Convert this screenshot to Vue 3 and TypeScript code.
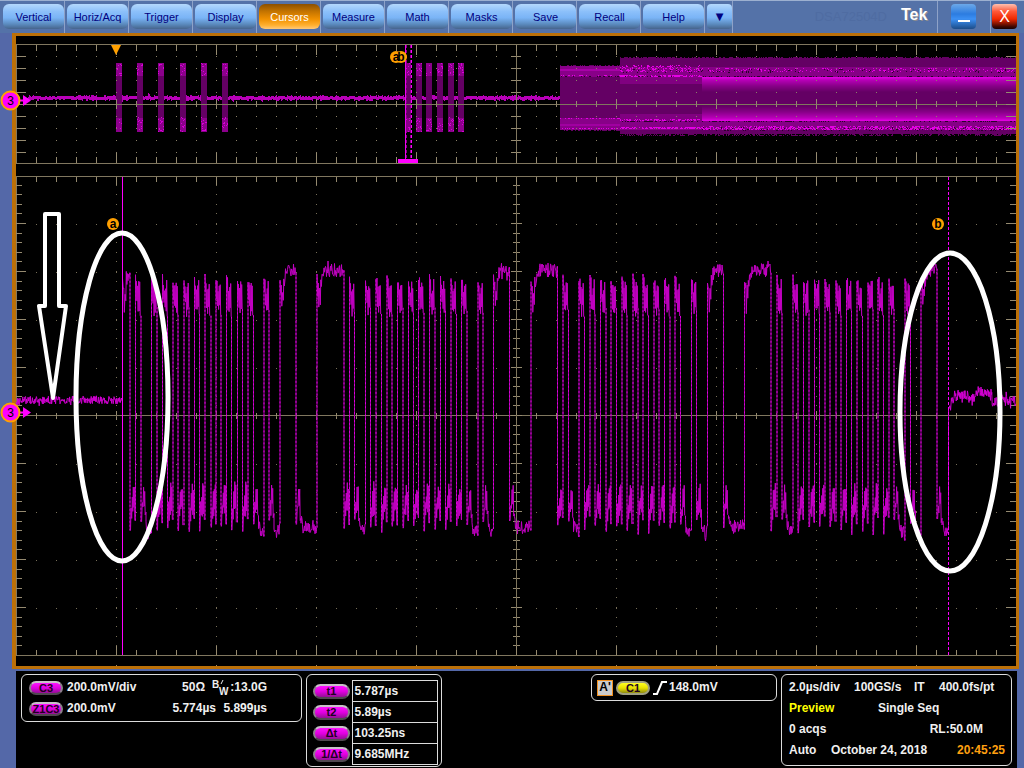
<script setup lang="ts">
const tabs: string[] = [
  'Vertical', 'Horiz/Acq', 'Trigger', 'Display', 'Cursors', 'Measure',
  'Math', 'Masks', 'Save', 'Recall', 'Help',
]
const activeTab = 'Cursors'

const readouts = [
  { label: 't1', value: '5.787µs' },
  { label: 't2', value: '5.89µs' },
  { label: 'Δt', value: '103.25ns' },
  { label: '1/Δt', value: '9.685MHz' },
]

/* Deterministic noise source, so the traces are stable between renders. */
let seed = 20181024
function rnd(): number {
  seed = (seed * 1664525 + 1013904223) % 4294967296
  return seed / 4294967296
}
function jitter(amount: number): number {
  return (rnd() * 2 - 1) * amount
}
function r1(v: number): number {
  return Math.round(v * 10) / 10
}

/* ---- graticules ---- */
const LEFT = 16
const RIGHT = 1016
const MID = 516

function overviewGrid(): string {
  let d = ''
  for (let i = 1; i < 50; i++) {
    const x = LEFT + i * 20
    const big = i % 5 === 0
    d += `M${x + 0.5} 45v${big ? 10 : 6}M${x + 0.5} 163v${big ? -10 : -6}M${x + 0.5} ${big ? 99 : 101}v${big ? 10 : 6}`
  }
  for (let j = 1; j < 10; j++) {
    const y = 44.5 + j * 12
    d += `M${LEFT} ${y}h10M${RIGHT} ${y}h-10M${MID - 5} ${y}h10`
  }
  return d
}
function overviewDots(): string {
  let d = ''
  for (let i = 1; i < 50; i++) {
    for (let j = 1; j < 10; j++) d += `M${LEFT + i * 20} ${44.5 + j * 12}h1`
  }
  return d
}
function mainGrid(): string {
  let d = ''
  for (let i = 1; i < 50; i++) {
    const x = LEFT + i * 20 + 0.5
    const big = i % 5 === 0
    d += `M${x} 177v${big ? 9 : 5}M${x} 655v${big ? -9 : -5}M${x} ${big ? 411 : 413}v${big ? 9 : 6}`
    if (big) d += `M${x} 665v1`
  }
  for (let j = 1; j < 50; j++) {
    const y = Math.round(176 + j * 9.6) - 0.5
    const big = j % 5 === 0
    const n = big ? 10 : 6
    const m = big ? 5 : 3
    d += `M${LEFT} ${y}h${n}M${RIGHT} ${y}h${-n}M${MID - m} ${y}h${m * 2 + 1}`
  }
  return d
}
function mainDots(): string {
  let d = ''
  for (let i = 1; i < 10; i++) {
    for (let j = 1; j < 50; j++) d += `M${LEFT + i * 100} ${Math.round(176 + j * 9.6) - 0.5}h1`
  }
  for (let j = 1; j < 10; j++) {
    for (let i = 1; i < 50; i++) d += `M${LEFT + i * 20} ${176 + j * 48 + 0.5}h1`
  }
  return d
}

/* ---- zoomed waveform: alternating rise and fall positions ---- */
const transitions: number[] = [
  122, 129.5, 135, 140.5, 151, 156.5, 162, 167, 172.5, 177.5, 183.5, 188.5, 194, 199,
  204.5, 210.5, 215.5, 220.5, 226, 231, 237, 242, 247.5, 253, 263.5, 268.5, 279.5, 295.5,
  316.5, 343.5, 349, 354, 365, 370, 375.5, 381, 386.5, 391.5, 397, 402.5, 408, 413, 418, 423.5,
  429, 434.5, 440, 445, 450.5, 456, 461, 466.5, 477.5, 482.5, 493, 509, 530.5, 557,
  562.5, 568, 578.5, 584, 589.5, 594.5, 600, 605.5, 610.5, 616, 621.5, 626.5, 632.5, 637.5,
  642.5, 648, 653.5, 658.5, 664, 669.5, 674.5, 680, 691, 696, 707, 723, 744, 770.5,
  776.5, 781.5, 792.5, 797.5, 803, 808.5, 814, 819, 824.5, 829.5, 835.5, 840.5, 846, 851,
  856.5, 862, 867.5, 872.5, 877.5, 883, 888.5, 893.5, 904.5, 910, 920.5, 936.5, 948,
]

const shortHigh = [[0, 278], [0.5, 296], [1, 282], [1.5, 306], [2, 290], [2.6, 312], [3.2, 286], [3.7, 308], [4.2, 284], [4.7, 312]]
const longHigh = [[0, 279], [0.7, 292], [1.3, 284], [1.8, 309], [2.6, 290], [3.3, 300], [3.8, 276], [4.4, 284]]
const shortLow = [[0.5, 530], [1.1, 505], [1.7, 518], [2.3, 494], [2.8, 512], [3.3, 485], [3.8, 510], [4.3, 488], [4.8, 521]]
const longLow = [[0.6, 523], [1.3, 505], [1.9, 512], [2.6, 487], [3.2, 508], [3.7, 488], [4.2, 518], [5, 514]]

const crests: string[] = []
const edges: string[] = []
function buildWave(): void {
  let lastY = 400
  for (let i = 0; i < transitions.length - 1; i++) {
    const x0 = transitions[i]
    const w = transitions[i + 1] - x0
    const high = i % 2 === 0
    const long = w > 6.5
    const shape = high ? (long ? longHigh : shortHigh) : long ? longLow : shortLow
    const points = shape
      .filter((p) => p[0] < w)
      .map((p) => [x0 + p[0], p[1] + jitter(5)])
    if (long) {
      const level = high ? (w < 9 ? 276 : 270) : w > 15 ? 527 : 531
      for (let t = 5; t < w - 0.3; t += 0.5) {
        const settle = high ? Math.max(0, 8 - t) * 1.5 : -Math.max(0, 7 - t) * 3
        const spike = rnd() < 0.15 ? jitter(5) : 0
        points.push([x0 + t, level + settle + spike + jitter(7)])
      }
    }
    edges.push(`M${x0 + 0.5} ${r1(lastY)}V${r1(points[0][1])}`)
    crests.push('M' + points.map((p) => `${r1(p[0] + 0.5)} ${r1(p[1])}`).join('L'))
    lastY = points[points.length - 1][1]
  }
  edges.push(`M948.5 ${r1(lastY)}V410`)
}
buildWave()

function noisyLine(from: number, to: number, step: number, amp: number, level: (x: number) => number): string {
  const pts: string[] = []
  for (let x = from; x <= to; x += step) {
    const spike = rnd() < 0.12 ? jitter(amp) : 0
    pts.push(`${r1(x)} ${r1(level(x) + spike + jitter(amp))}`)
  }
  return 'M' + pts.join('L')
}
const lead = noisyLine(16, 122, 0.4, 4, (x) => 400 + Math.max(0, 24 - x) / 3)
function tailLevel(x: number): number {
  if (x < 953) return 409 - (x - 949) * 2.2
  if (x < 958) return 400 - (x - 953)
  if (x < 968) return 395
  if (x < 976) return 398
  if (x < 989) return 392
  if (x < 992) return 396
  return 401
}
const tail = noisyLine(949, 1016, 0.4, 5, tailLevel)

/* ---- overview waveform ---- */
const bursts: number[] = [116, 137, 158, 180, 201, 222, 405, 416, 426, 437, 448, 458]
const overviewBase = noisyLine(28, 560, 1, 1, () => 98)

function speckle(from: number, to: number, top: number, bottom: number, density: number): string {
  let d = ''
  for (let y = top; y < bottom; y++) {
    for (let x = from; x < to; x++) {
      if (rnd() < density) d += `M${x} ${y + 0.5}h1`
    }
  }
  return d
}
const burstSpeckle = bursts
  .map((x) => speckle(x, x + 6, 63, 76, 0.12) + speckle(x, x + 6, 117, 132, 0.12))
  .join('')
const brightSpeckle =
  speckle(560, 620, 75, 76, 0.4) + speckle(560, 620, 118, 119, 0.4) + speckle(560, 620, 128, 129, 0.5) +
  speckle(620, 702, 65, 72, 0.25) + speckle(620, 702, 75, 77, 0.5) + speckle(620, 702, 119, 121, 0.5) +
  speckle(620, 702, 127, 129, 0.6) + speckle(702, 1016, 68, 72, 0.17) + speckle(702, 1016, 126, 130, 0.42)
const darkSpeckle =
  speckle(620, 1016, 69, 73, 0.06) + speckle(560, 1016, 76, 77, 0.35) +
  speckle(620, 1016, 121, 122, 0.35) + speckle(702, 1016, 127, 131, 0.14)
const fringe =
  speckle(560, 620, 65, 66, 0.5) + speckle(560, 620, 130, 131, 0.5) +
  speckle(620, 1016, 57, 58, 0.5) + speckle(620, 1016, 134, 136, 0.4)

const channelMarkers: number[] = [100, 412]
</script>

<template>
  <div class="scope">
    <header class="menubar">
      <nav class="tabs" aria-label="Main menu">
        <span v-for="tab in tabs" :key="tab" class="slot">
          <button type="button" class="tab" :class="{ active: tab === activeTab }">{{ tab }}</button>
        </span>
        <span class="slot"><button type="button" class="tab more" aria-label="More menus">▼</button></span>
      </nav>
      <span class="model">DSA72504D</span>
      <span class="brand">Tek</span>
      <span class="window-slot divided"><button type="button" class="win min" aria-label="Minimize"><i class="dash"></i></button></span>
      <span class="window-slot"><button type="button" class="win close" aria-label="Close">X</button></span>
    </header>

    <main class="display">
      <svg class="screen" viewBox="16 36 1000 630" role="img" aria-label="Waveform display">
        <defs>
          <linearGradient id="upperGlow" x1="0" y1="0" x2="0" y2="1">
            <stop offset="0" stop-color="#e800e8" />
            <stop offset="0.2" stop-color="#b800b8" />
            <stop offset="0.6" stop-color="#880088" />
            <stop offset="1" stop-color="#640064" />
          </linearGradient>
          <linearGradient id="lowerGlow" x1="0" y1="1" x2="0" y2="0">
            <stop offset="0" stop-color="#e800e8" />
            <stop offset="0.2" stop-color="#b800b8" />
            <stop offset="0.6" stop-color="#880088" />
            <stop offset="1" stop-color="#640064" />
          </linearGradient>
        </defs>

        <!-- overview traces -->
        <g shape-rendering="crispEdges">
          <path :d="overviewBase" class="base" />
          <g v-for="x in bursts" :key="x">
            <rect :x="x" y="63" width="6" height="69" fill="#640064" />
            <rect :x="x" y="63" width="6" height="13" fill="#8c008c" />
            <rect :x="x" y="118" width="6" height="14" fill="#8c008c" />
          </g>
          <path :d="burstSpeckle" stroke="#d800d8" />
          <rect x="560" y="66" width="60" height="64" fill="#640064" />
          <rect x="560" y="66" width="60" height="11" fill="#880088" />
          <rect x="560" y="69" width="60" height="2" fill="#a800a8" />
          <rect x="560" y="118" width="60" height="12" fill="#880088" />
          <rect x="560" y="124" width="60" height="2" fill="#a000a0" />
          <rect x="620" y="58" width="396" height="76" fill="#640064" />
          <rect x="620" y="67" width="396" height="11" fill="#860086" />
          <rect x="620" y="78" width="82" height="6" fill="#800080" />
          <rect x="620" y="114" width="82" height="6" fill="#800080" />
          <rect x="620" y="120" width="396" height="10" fill="#860086" />
          <rect x="702" y="77" width="314" height="15" fill="url(#upperGlow)" />
          <rect x="702" y="106" width="314" height="15" fill="url(#lowerGlow)" />
          <path :d="fringe" stroke="#640064" />
          <path :d="darkSpeckle" stroke="#2c002c" />
          <path :d="brightSpeckle" stroke="#e400e4" />
        </g>

        <!-- graticules -->
        <g shape-rendering="crispEdges" fill="none">
          <path d="M16 44.5H1016M16 163.5H1016M16 104.5H1016M16.5 44V164M516.5 44V164" stroke="#80775f" />
          <path :d="overviewGrid()" stroke="#958a70" />
          <path :d="overviewDots()" stroke="#8a8068" />
          <path d="M16 176.5H1016M16 655.5H1016M16 415.5H1016M16.5 176V656M516.5 176V656" stroke="#80775f" />
          <path :d="mainGrid()" stroke="#958a70" />
          <path :d="mainDots()" stroke="#776e58" />
        </g>

        <!-- zoomed trace -->
        <g fill="none">
          <path :d="edges.join('')" class="edge" />
          <path :d="edges.join('')" class="edge-dots" />
          <path :d="crests.join('')" class="crest" />
          <path :d="lead" class="flat" />
          <path :d="tail" class="flat" />
        </g>

        <!-- cursors and markers -->
        <g shape-rendering="crispEdges">
          <path d="M406.5 45V160M410.5 45V160" stroke="#8c008c" stroke-dasharray="3 2" />
          <path d="M405.5 45V160" stroke="#f000f0" />
          <path d="M411.5 45V160" stroke="#ff00ff" stroke-dasharray="3 2" />
          <rect x="398" y="159" width="20" height="4" fill="#ff00ff" />
          <path d="M122.5 177V655" stroke="#ff00ff" />
          <path d="M948.5 177V655" stroke="#ff00ff" stroke-dasharray="3 2" />
        </g>
        <path d="M111 45H121L116 55Z" fill="#ffa000" />

        <g class="cursor-tag">
          <circle cx="396" cy="57" r="6" />
          <circle cx="401" cy="57" r="6" />
          <text x="396" y="61">a</text>
          <text x="401" y="61">b</text>
          <circle cx="113" cy="224" r="6" />
          <text x="113" y="228">a</text>
          <circle cx="938" cy="224" r="6" />
          <text x="938" y="228">b</text>
        </g>

        <g v-for="y in channelMarkers" :key="y" class="channel-tag">
          <path :d="`M20 ${y + 0.5}h5`" stroke="#ff00ff" stroke-width="2" />
          <path :d="`M23 ${y - 5}L31 ${y + 0.5}L23 ${y + 6}Z`" fill="#ff00ff" />
          <circle cx="10.5" :cy="y + 0.5" r="9" />
          <text x="10.5" :y="y + 5">3</text>
        </g>

        <!-- annotations -->
        <g fill="none" stroke="#fff">
          <ellipse cx="122" cy="397" rx="46" ry="164" stroke-width="5" />
          <ellipse cx="950" cy="412" rx="50" ry="159" stroke-width="5" />
          <path d="M45 214H59V306H66L53 398L39 306H45Z" stroke-width="4" stroke-linejoin="round" />
        </g>
      </svg>
    </main>

    <footer class="status">
      <section class="panel channels" aria-label="Channels">
        <span class="pill">C3</span>
        <span>200.0mV/div</span>
        <span class="right impedance">50Ω</span>
        <span class="right bandwidth">
          <svg class="bw" viewBox="0 0 18 18" width="18" height="18" aria-label="Bandwidth">
            <text x="0" y="9">B</text>
            <text x="7" y="16">W</text>
            <path d="M9 5L11 1" stroke="#f0f0f0" />
          </svg>:13.0G
        </span>
        <span class="pill">Z1C3</span>
        <span>200.0mV</span>
        <span class="right">5.774µs</span>
        <span class="right">5.899µs</span>
      </section>

      <section class="panel cursors" aria-label="Cursor readouts">
        <table>
          <tbody>
            <tr v-for="row in readouts" :key="row.label">
              <th scope="row"><span class="pill wide">{{ row.label }}</span></th>
              <td>{{ row.value }}</td>
            </tr>
          </tbody>
        </table>
      </section>

      <section class="panel trigger" aria-label="Trigger">
        <span class="event">A'</span>
        <span class="pill yellow">C1</span>
        <svg class="slope" viewBox="0 0 14 14" width="14" height="14" aria-label="Rising edge">
          <path d="M0 13H4L9 1H14" fill="none" stroke="#fff" stroke-width="2" />
        </svg>
        <span>148.0mV</span>
      </section>

      <section class="panel acquisition" aria-label="Acquisition">
        <div class="line">
          <span class="c1">2.0µs/div</span><span class="c2">100GS/s</span><span class="c3">IT</span><span>400.0fs/pt</span>
        </div>
        <div class="line">
          <span class="preview">Preview</span><span>Single Seq</span>
        </div>
        <div class="line spread">
          <span>0 acqs</span><span class="record">RL:50.0M</span>
        </div>
        <div class="line">
          <span class="auto">Auto</span><span>October 24, 2018</span><span class="clock">20:45:25</span>
        </div>
      </section>
    </footer>
  </div>
</template>

<style>
body {
  margin: 0;
  background: #5468a8;
}
</style>

<style scoped>
.scope {
  display: flex;
  flex-direction: column;
  min-height: 100vh;
  background: #5468a8;
  font-family: "Liberation Sans", Arial, sans-serif;
}
.scope * {
  box-sizing: border-box;
}
button {
  margin: 0;
  padding: 0;
  border: 0;
  font-family: inherit;
}

/* menu bar */
.menubar {
  display: flex;
  height: 33px;
  background: #5472a8;
  border-top: 1px solid #9cb0d0;
}
.tabs {
  display: flex;
  padding-left: 1px;
}
.slot {
  display: flex;
  padding: 3px 0 4px 2px;
  border-right: 1px solid #8ea2c8;
}
.tab {
  width: 61px;
  height: 25px;
  border-radius: 6px;
  background: linear-gradient(#b4d8fc 0%, #8cc0fa 30%, #7ab4f6 55%, #5c8cc0 80%, #46648c 100%);
  color: #000080;
  font-size: 11px;
}
.tab.active {
  background: linear-gradient(#8c5000 0%, #c47400 30%, #f09000 60%, #ffb030 85%, #ffc878 100%);
  color: #fff;
}
.tab.more {
  width: 25px;
  border-radius: 4px;
  font-family: "DejaVu Sans", sans-serif;
  font-size: 10px;
}
.model {
  margin: 8px 14px 0 auto;
  color: #4f6ca2;
  font-size: 13px;
}
.brand {
  width: 36px;
  margin-top: 5px;
  color: #fff;
  font-size: 16px;
  font-weight: bold;
  text-shadow: 1px 1px 0 #8c8c90;
}
.window-slot {
  display: flex;
  padding: 3px 7px 4px 1px;
}
.window-slot.divided {
  padding: 3px 14px 4px 13px;
  border-left: 1px solid #8ea2c8;
  border-right: 1px solid #8ea2c8;
}
.win {
  display: flex;
  justify-content: center;
  width: 25px;
  height: 25px;
  border-radius: 4px;
  color: #fff;
}
.min {
  align-items: flex-end;
  padding-bottom: 7px;
  background: linear-gradient(#6ca8e8 0%, #2c7ce0 40%, #3c90f4 60%, #1c4c88 100%);
}
.dash {
  width: 12px;
  height: 2px;
  background: #fff;
}
.close {
  align-items: center;
  background: linear-gradient(#ffc0b0 0%, #ff5838 30%, #f02800 60%, #400800 90%, #180000 100%);
  font-size: 16px;
}

/* waveform area */
.display {
  margin: 0 5px 0 12px;
  border: 3px solid #bc7008;
  border-left-width: 4px;
  background: #000;
}
.screen {
  display: block;
  width: 100%;
  height: auto;
  overflow: visible;
}
.base {
  fill: none;
  stroke: #b800b8;
  stroke-width: 3;
}
.edge {
  stroke: #9c009c;
}
.edge-dots {
  stroke: #dc00dc;
  stroke-dasharray: 2 2;
}
.crest {
  stroke: #c400c4;
}
.flat {
  stroke: #d000d0;
}
.cursor-tag circle {
  fill: #ffa000;
}
.cursor-tag text {
  fill: #000;
  font-size: 12px;
  font-weight: bold;
  text-anchor: middle;
}
.channel-tag circle {
  fill: #ff00ff;
  stroke: #ffa000;
  stroke-width: 2;
}
.channel-tag text {
  fill: #000;
  font-size: 12px;
  text-anchor: middle;
}

/* status area */
.status {
  display: flex;
  flex: 1;
  align-items: flex-start;
  gap: 4px;
  margin: 2px 7px 0 16px;
  padding: 3px 5px 1px;
  background: #000;
  color: #f0f0f0;
  font-size: 12px;
  font-weight: bold;
  line-height: 21px;
}
.panel {
  border: 1px solid #dcdcdc;
  border-radius: 6px;
  white-space: nowrap;
}
.channels {
  display: grid;
  grid-template-columns: 34px 78px 1fr 47px;
  column-gap: 4px;
  align-items: center;
  width: 281px;
  padding: 2px 34px 2px 7px;
}
.right {
  text-align: right;
}
.impedance {
  padding-right: 11px;
}
.bandwidth {
  display: flex;
  justify-content: flex-end;
  align-items: center;
}
.bw {
  flex: none;
}
.bw text {
  fill: #f0f0f0;
  font-size: 10px;
  font-weight: bold;
}
.pill {
  display: block;
  width: 34px;
  height: 14px;
  border: 2px solid #8c808c;
  border-top-color: #c8c0c8;
  border-bottom-color: #504850;
  border-radius: 8px;
  background: linear-gradient(#ff10ff, #e000e0 50%, #941094);
  color: #200020;
  font-size: 11px;
  line-height: 11px;
  text-align: center;
}
.pill.wide {
  width: 37px;
  height: 15px;
}
.pill.yellow {
  border-color: #a0a080;
  background: linear-gradient(#ffff20, #e8e000 50%, #908c10);
}
.cursors {
  width: 136px;
  padding: 5px 3px 1px 6px;
}
.cursors table {
  width: 100%;
  border-collapse: collapse;
}
.cursors th {
  width: 39px;
  padding: 0;
}
.cursors td {
  height: 21px;
  padding: 0 0 0 2px;
  border: 1px solid #dcdcdc;
  line-height: 19px;
}
.trigger {
  display: flex;
  align-items: center;
  gap: 3px;
  width: 186px;
  margin-left: auto;
  padding: 2px 5px;
}
.event {
  width: 16px;
  height: 16px;
  border: 1px solid #f09020;
  background: #ccc;
  color: #000;
  line-height: 13px;
  text-align: center;
}
.slope {
  margin-right: -1px;
}
.acquisition {
  width: 231px;
  padding: 2px 6px 4px 7px;
}
.line {
  display: flex;
}
.c1 {
  width: 65px;
}
.c2 {
  width: 60px;
}
.c3 {
  width: 25px;
}
.preview {
  width: 89px;
  color: #ffff00;
}
.spread {
  justify-content: space-between;
}
.record {
  padding-right: 22px;
}
.auto {
  width: 42px;
}
.clock {
  margin-left: auto;
  color: #ffa010;
}
</style>
